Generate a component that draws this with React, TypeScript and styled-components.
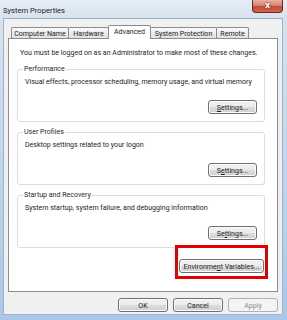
import React from "react";
import styled, { createGlobalStyle } from "styled-components";

const GlobalStyle = createGlobalStyle`
  html, body {
    margin: 0;
    padding: 0;
  }
  body {
    width: 287px;
    height: 320px;
    overflow: hidden;
    font-family: Roboto, "Liberation Sans", Arial, sans-serif;
    font-size: 7.05px;
    color: #1c1c1c;
  }
`;

const Window = styled.div`
  box-sizing: border-box;
  width: 287px;
  height: 320px;
  display: flex;
  flex-direction: column;
  padding: 0 4px 5px 3px;
  background: linear-gradient(to bottom, #e6edf5 0px, #d6e2ef 18px, #bcd3ec 60%, #a9c7ea 100%);
`;

const TitleBar = styled.div`
  height: 18px;
  display: flex;
  justify-content: space-between;
  align-items: flex-start;
`;

const Title = styled.div`
  padding-top: 6px;
  font-size: 7.6px;
  line-height: 9px;
  color: #1e1e1e;
`;

const CloseButton = styled.div`
  box-sizing: border-box;
  width: 31px;
  height: 13px;
  display: flex;
  align-items: center;
  justify-content: center;
  border: 1px solid #6b2a22;
  border-top: none;
  border-radius: 0 0 4px 4px;
  background: linear-gradient(to bottom, #eab0a2 0%, #d88270 45%, #c44a36 55%, #d4644c 100%);
  color: #fff;
  font-family: "DejaVu Sans", sans-serif;
  font-weight: bold;
  font-size: 8px;
  line-height: 1;
  text-shadow: 0 0 2px #5a1c14;
`;

const Client = styled.div`
  box-sizing: border-box;
  flex: 1;
  display: flex;
  flex-direction: column;
  border: 1px solid #9fb1c5;
  background: #f0f0f0;
  padding: 6px 4px 2px 4px;
`;

const TabStrip = styled.div`
  height: 14px;
  margin-bottom: -1px;
  padding-left: 3px;
  display: flex;
  align-items: flex-end;
`;

const Tab = styled.div<{ $w: number; $active?: boolean }>`
  box-sizing: border-box;
  width: ${(p) => p.$w}px;
  margin-right: -1px;
  border: 1px solid #898c95;
  border-bottom: none;
  border-radius: 2px 2px 0 0;
  display: flex;
  align-items: center;
  justify-content: center;
  white-space: nowrap;
  height: ${(p) => (p.$active ? 14 : 11)}px;
  margin-bottom: ${(p) => (p.$active ? 0 : 1)}px;
  padding-bottom: ${(p) => (p.$active ? 2 : 0)}px;
  background: ${(p) =>
    p.$active ? "#ffffff" : "linear-gradient(to bottom, #fafafa 0%, #ececec 50%, #e1e1e1 100%)"};
  position: ${(p) => (p.$active ? "relative" : "static")};
  z-index: ${(p) => (p.$active ? 2 : "auto")};
  line-height: 9px;
`;

const Panel = styled.div`
  flex: 1;
  border: 1px solid #898c95;
  background: #fff;
  padding-top: 9px;
  display: flex;
  flex-direction: column;
`;

const AdminNote = styled.div`
  margin-left: 11px;
  line-height: 10px;
  white-space: nowrap;
`;

const Groups = styled.div`
  margin: 6px 12px 0 8px;
  display: flex;
  flex-direction: column;
`;

const Group = styled.fieldset<{ $first?: boolean }>`
  margin: ${(p) => (p.$first ? 0 : 5)}px 0 0 0;
  min-width: 0;
  border: 1px solid #d5dfe5;
  border-radius: 3px;
  padding: 3px 7px 7px 7px;
`;

const Legend = styled.legend`
  padding: 0 1px;
  margin-left: -2px;
  line-height: 10px;
  color: #2a2a2a;
`;

const Desc = styled.div`
  line-height: 10px;
  white-space: nowrap;
`;

const ButtonRow = styled.div<{ $top?: number }>`
  display: flex;
  justify-content: flex-end;
  margin-top: ${(p) => p.$top ?? 0}px;
`;

const Button = styled.div<{ $w: number; $disabled?: boolean }>`
  box-sizing: border-box;
  width: ${(p) => p.$w}px;
  height: 14px;
  display: flex;
  align-items: center;
  justify-content: center;
  white-space: nowrap;
  border: 1px solid ${(p) => (p.$disabled ? "#adb2b5" : "#707070")};
  border-radius: 3px;
  background: ${(p) =>
    p.$disabled
      ? "#f4f4f4"
      : "linear-gradient(to bottom, #f2f2f2 0%, #ebebeb 50%, #dddddd 51%, #cfcfcf 100%)"};
  box-shadow: inset 0 0 0 1px ${(p) => (p.$disabled ? "#f4f4f4" : "#fbfbfb")};
  color: ${(p) => (p.$disabled ? "#8a8a8a" : "#1c1c1c")};
  line-height: 9px;
`;

const EnvRow = styled.div`
  margin-top: 11px;
  margin-right: 1px;
  display: flex;
  justify-content: flex-end;
`;

const Highlighted = styled.div`
  position: relative;
`;

const RedFrame = styled.div`
  position: absolute;
  left: -4px;
  right: -4px;
  top: -14px;
  bottom: -6px;
  border: 3px solid #e30000;
  pointer-events: none;
`;

const Key = styled.span`
  text-decoration: underline;
`;

const FooterRow = styled.div`
  margin-top: 6px;
  display: flex;
  justify-content: flex-end;
  gap: 5px;
`;

const tabs = [
  { label: "Computer Name", w: 58 },
  { label: "Hardware", w: 41 },
  { label: "Advanced", w: 43, active: true },
  { label: "System Protection", w: 67 },
  { label: "Remote", w: 33 },
];

export default function App() {
  return (
    <>
      <GlobalStyle />
      <Window>
        <TitleBar>
          <Title>System Properties</Title>
          <CloseButton>x</CloseButton>
        </TitleBar>
        <Client>
          <TabStrip>
            {tabs.map((t) => (
              <Tab key={t.label} $w={t.w} $active={t.active}>
                {t.label}
              </Tab>
            ))}
          </TabStrip>
          <Panel>
            <AdminNote>
              You must be logged on as an Administrator to make most of these changes.
            </AdminNote>
            <Groups>
              <Group $first>
                <Legend>Performance</Legend>
                <Desc>Visual effects, processor scheduling, memory usage, and virtual memory</Desc>
                <ButtonRow $top={13}>
                  <Button $w={49}>
                    <Key>S</Key>ettings...
                  </Button>
                </ButtonRow>
              </Group>
              <Group>
                <Legend>User Profiles</Legend>
                <Desc>Desktop settings related to your logon</Desc>
                <ButtonRow $top={13}>
                  <Button $w={49}>
                    S<Key>e</Key>ttings...
                  </Button>
                </ButtonRow>
              </Group>
              <Group>
                <Legend>Startup and Recovery</Legend>
                <Desc>System startup, system failure, and debugging information</Desc>
                <ButtonRow $top={13}>
                  <Button $w={49}>
                    Se<Key>t</Key>tings...
                  </Button>
                </ButtonRow>
              </Group>
              <EnvRow>
                <Highlighted>
                  <Button $w={85}>
                    Environme<Key>n</Key>t Variables...
                  </Button>
                  <RedFrame />
                </Highlighted>
              </EnvRow>
            </Groups>
          </Panel>
          <FooterRow>
            <Button $w={50}>OK</Button>
            <Button $w={50}>Cancel</Button>
            <Button $w={50} $disabled>
              Apply
            </Button>
          </FooterRow>
        </Client>
      </Window>
    </>
  );
}
